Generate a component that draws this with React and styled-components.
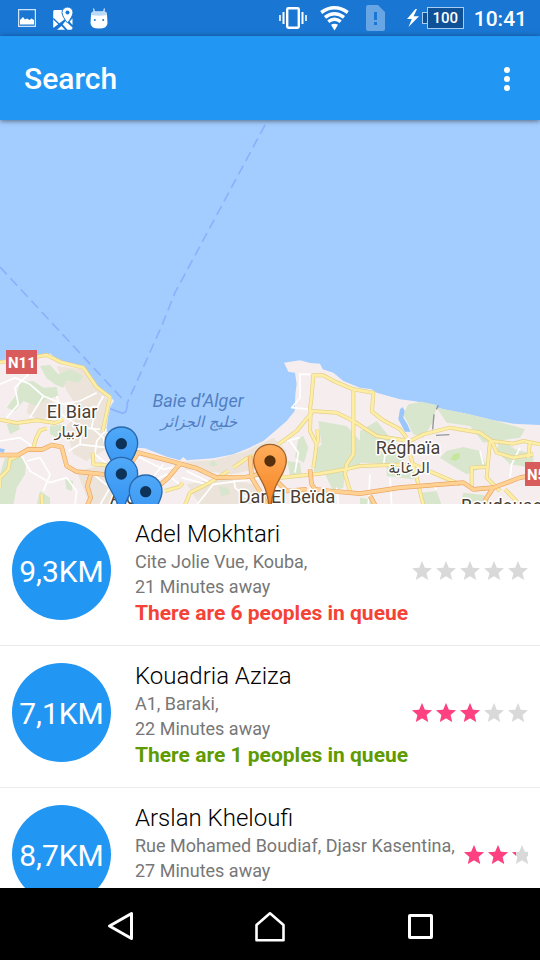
import React from "react";
import styled, { createGlobalStyle } from "styled-components";

const GlobalStyle = createGlobalStyle`
  *, *::before, *::after { box-sizing: border-box; }
  body {
    margin: 0;
    background: #fff;
    font-family: Roboto, "Noto Sans", sans-serif;
  }
`;

const Screen = styled.div`
  display: flex;
  flex-direction: column;
  height: 100vh;
  overflow: hidden;
`;

const StatusBar = styled.div`
  flex: none;
  display: flex;
  justify-content: space-between;
  align-items: center;
  height: 36px;
  padding: 0 13px 0 18px;
  background: #1976d2;
  color: #fff;
`;

const IconGroup = styled.div`
  display: flex;
  align-items: center;
  gap: ${(p) => p.$gap}px;
`;

const Icon = styled.svg`
  display: block;
  flex: none;
`;

const Battery = styled.span`
  display: flex;
  align-items: center;
  height: 22px;
`;

const BatteryNub = styled.span`
  width: 5px;
  height: 12px;
  border: 1px solid #a9cdf2;
  border-right: 0;
  background: #0f5197;
`;

const BatteryBody = styled.span`
  width: 37px;
  height: 22px;
  border: 1px solid #a9cdf2;
  background: #0f5197;
  font-size: 15px;
  line-height: 20px;
  font-weight: 500;
  text-align: center;
`;

const Clock = styled.time`
  font-size: 21px;
  line-height: 36px;
  padding-top: 2px;
  font-weight: 500;
`;

const AppBar = styled.header`
  position: relative;
  z-index: 1;
  flex: none;
  display: flex;
  justify-content: space-between;
  align-items: center;
  height: 84px;
  padding: 2px 9px 0 24px;
  background: #2196f3;
  color: #fff;
  box-shadow: 0 1px 5px rgba(0, 0, 0, 0.5);
`;

const Title = styled.h1`
  margin: 0;
  font-size: 30px;
  line-height: 36px;
  font-weight: 500;
`;

const IconButton = styled.button`
  display: flex;
  justify-content: center;
  align-items: center;
  width: 48px;
  height: 48px;
  padding: 0;
  border: 0;
  background: none;
  color: inherit;
`;

const MapArea = styled.section`
  flex: 1 1 0;
  min-height: 0;
  background: #a4cdff;
`;

const MapCanvas = styled.svg`
  display: block;
  width: 100%;
  height: 100%;
`;

const MapLabel = styled.text`
  font-family: Roboto, sans-serif;
  font-size: ${(p) => p.$size || 18}px;
  fill: ${(p) => (p.$sea ? "#527fc2" : "#493f35")};
  font-style: ${(p) => (p.$sea ? "italic" : "normal")};
  stroke: ${(p) => (p.$sea ? "none" : "#fff")};
  stroke-width: 3px;
  stroke-linejoin: round;
  paint-order: stroke;
  text-anchor: ${(p) => p.$anchor || "middle"};
`;

const ArabicLabel = styled(MapLabel)`
  font-family: "DejaVu Sans", sans-serif;
`;

const ShieldText = styled.text`
  font-family: Roboto, sans-serif;
  font-size: 15px;
  font-weight: 700;
  fill: #fff;
`;

const DoctorList = styled.ul`
  flex: 1 1 0;
  min-height: 0;
  margin: 0;
  padding: 0;
  overflow-y: auto;
  scrollbar-width: none;
  list-style: none;
  background: #fff;
`;

const DoctorRow = styled.li`
  display: flex;
  align-items: center;
  height: 142px;
  padding: 0 12px 8px;
  border-bottom: 1px solid #ececec;
`;

const Distance = styled.div`
  flex: none;
  display: flex;
  justify-content: center;
  align-items: center;
  width: 99px;
  height: 99px;
  padding-top: 2px;
  border-radius: 50%;
  background: #2196f3;
  color: #fff;
  font-size: 30px;
  line-height: 36px;
`;

const Info = styled.div`
  flex: 1 0 auto;
  padding: 4px 0 0 24px;
  white-space: nowrap;
`;

const Name = styled.h2`
  margin: 0;
  color: #000;
  font-size: 24px;
  line-height: 30px;
  font-weight: 300;
`;

const Detail = styled.p`
  margin: 0;
  padding-right: 7px;
  color: #777;
  font-size: 18px;
  line-height: 25px;
`;

const Queue = styled.p`
  margin: 0;
  color: ${(p) => (p.$busy ? "#f44336" : "#5f9b00")};
  font-size: 21px;
  line-height: 28px;
  font-weight: 700;
`;

const Stars = styled.div`
  flex: 0 1 118px;
  min-width: 0;
  display: flex;
  overflow: hidden;
`;

const NavBar = styled.nav`
  flex: none;
  display: flex;
  justify-content: center;
  align-items: center;
  height: 72px;
  padding-top: 4px;
  background: #000;
  color: #fff;
`;

const NavButton = styled(IconButton)`
  flex: 0 1 150px;
`;

const STAR =
  "M12 17.27L18.18 21l-1.64-7.03L22 9.24l-7.19-.61L12 2 9.19 8.63 2 9.24l5.46 4.73L5.82 21z";

function Rating({ id, value }) {
  return (
    <Stars role="img" aria-label={`${value} of 5 stars`}>
      {[0, 1, 2, 3, 4].map((i) => {
        const part = Math.max(0, Math.min(1, value - i));
        return (
          <Icon key={i} width="24" height="24" viewBox="0 0 24 24">
            <clipPath id={`${id}-${i}`}>
              <rect width={24 * part} height="24" />
            </clipPath>
            <path d={STAR} fill="#d9d9d9" />
            <path d={STAR} fill="#ff4081" clipPath={`url(#${id}-${i})`} />
          </Icon>
        );
      })}
    </Stars>
  );
}

function Pin({ x, y, tone }) {
  const orange = tone === "orange";
  return (
    <g transform={`translate(${x} ${y})`}>
      <path
        d="M0-50C-29-50-49-28-49-1C-49 30-26 50-14 84C-8 102-4 118-3 136L3 136C4 118 8 102 14 84C26 50 49 30 49-1C49-28 29-50 0-50Z"
        fill={orange ? "url(#pinOrange)" : "url(#pinBlue)"}
        stroke={orange ? "#a2622a" : "#2a68ab"}
        strokeWidth="4"
      />
      <circle r="17" fill={orange ? "#552f0c" : "#0d3358"} />
    </g>
  );
}

const GREENS = [
  "M120 75L150 72 175 100 210 85 250 105 235 125 200 118 190 140 165 130 140 112Z",
  "M60 125L100 120 130 140 170 138 175 165 140 175 110 195 70 180 45 210 20 200 50 160Z",
  "M15 350L60 345 80 360 75 400 50 440 40 492 0 492 0 400Z",
  "M150 255L190 250 200 275 170 290 150 280Z",
  "M120 450L150 470 150 492 110 492Z",
  "M195 415L220 420 215 450 200 445Z",
  "M20 250L55 245 60 265 30 280Z",
  "M895 290L910 285 925 320 912 365 885 350Z",
  "M862 360L900 365 905 400 870 405Z",
  "M955 240L1040 255 1080 300 1080 375 1035 385 1030 440 1000 450 975 400 940 405 945 330 965 310Z",
  "M1080 270L1130 240 1170 290 1220 350 1190 370 1080 365Z",
  "M1225 190L1265 182 1310 192 1300 240 1270 290 1240 280 1210 220Z",
  "M1310 200L1400 218 1490 240 1575 265 1560 290 1450 305 1410 255 1340 245Z",
  "M1340 330L1390 318 1440 330 1460 375 1400 400 1350 370 1320 350Z",
  "M1160 370L1260 395 1240 415 1160 405Z",
  "M1080 470L1110 475 1130 492 1080 492Z",
  "M1390 455L1450 462 1480 492 1380 492Z",
  "M1500 290L1545 325 1600 340 1600 380 1530 370 1490 330Z",
  "M1260 455L1310 450 1325 492 1270 492Z",
  "M655 435L685 440 690 460 665 465Z",
  "M640 358L653 370 640 378 626 368Z",
];

const BEIGES = [
  "M170 75L245 85 305 150 325 180 305 250 325 320 260 360 220 340 195 260 240 210 200 150Z",
  "M90 170L150 165 170 210 120 240 80 215Z",
  "M230 390L320 370 350 410 340 492 270 492Z",
  "M545 362L640 358 740 330 820 290 860 330 780 380 700 400 560 385Z",
  "M560 430L660 410 760 430 800 492 600 492Z",
  "M1080 300L1130 290 1150 340 1090 345Z",
];

const STREETS = [
  "M0 130L45 110 90 130 130 165 190 190 240 180 290 155",
  "M60 60L85 100 45 140 55 190 20 230",
  "M170 165L185 220 245 260 300 265",
  "M310 165L285 210 275 260 310 290 320 330",
  "M245 260L240 310 205 330 M240 310L320 320",
  "M200 185L240 215 285 195 M130 165L90 230",
  "M60 335L90 390 150 425 200 410 230 450 225 492",
  "M0 300L60 290 110 325 M80 360L120 350 150 400 130 450",
  "M280 400L330 440 300 492 M420 440L500 400 540 430",
  "M320 265L290 300 285 340 335 380",
  "M410 345L490 385 540 375 M450 420L490 370",
  "M640 430L790 410 840 400 M700 400L705 440 740 470",
  "M900 95L900 170 875 200 930 205 M900 100L930 100",
  "M870 300L895 335 885 395 M860 300L900 290",
  "M560 390L640 430 590 492 M545 410L620 430",
  "M1170 410L1175 492 M1110 400L1105 492 M1290 425L1310 445",
  "M1560 320L1535 370 1530 410 M1450 370L1440 330",
  "M1150 380L1160 300 M930 420L935 492 M1010 440L1015 492",
];

const YELLOWS = [
  "M0 64L140 42 185 64 250 80 290 138 330 168 320 215 308 270",
  "M0 236L50 246 110 238 165 246 190 235",
  "M140 262L120 268 108 292 100 320",
  "M55 345L30 355 25 385 0 410 0 440",
  "M278 335L280 370 320 372",
  "M125 460L127 492",
  "M495 450L540 437",
  "M540 437L548 425",
  "M555 492L570 455 630 425 685 390",
  "M700 380L740 352 760 345",
  "M835 310L890 270 935 215 930 205 935 165 940 103 970 103 1005 122 1060 145 1120 155 1116 212 1150 238 1200 265 1220 290",
  "M935 210L1010 215 1060 240 1130 285 1215 298",
  "M932 210L930 270 950 310 940 380",
  "M952 265L955 305",
  "M1060 150L1060 340 1040 370 1035 400 1050 450",
  "M840 410L960 398 1035 385 1080 375 1240 370 1380 430",
  "M1220 305L1270 280 1350 260 1440 275 1475 300 1540 308 1570 300 1620 310",
  "M1475 300L1490 335 1540 350 1600 340",
  "M1470 300L1460 410 1500 450",
  "M1415 440L1415 380 1460 378",
  "M1230 340L1250 410 1270 492",
  "M1590 300L1585 350",
  "M1515 445L1560 492",
];

const ORANGES = [
  "M0 342L55 342 85 325 125 326 155 312 185 318 200 375 230 392 330 402 400 355",
  "M272 402L262 435 272 470 262 492",
  "M405 332L540 368 590 382 650 410 740 408 775 400",
  "M415 335L390 370",
  "M540 368L505 410 470 440",
  "M750 345L755 410 785 460 800 492",
  "M775 400L830 420 860 450 920 445",
  "M930 385L935 430 945 445 990 450 1080 458 1200 440 1390 425 1420 445 1480 440 1560 410 1620 400",
  "M1480 440L1460 470 1450 492",
  "M1110 465L1125 492",
];

function Roads({ paths, edge, fill, width }) {
  return (
    <g fill="none" strokeLinejoin="round">
      <g stroke={edge} strokeWidth={width}>
        {paths.map((d) => (
          <path key={d} d={d} />
        ))}
      </g>
      <g stroke={fill} strokeWidth={width - 4}>
        {paths.map((d) => (
          <path key={d} d={d} />
        ))}
      </g>
    </g>
  );
}

function CityMap() {
  return (
    <MapCanvas
      viewBox="0 120 540 384"
      preserveAspectRatio="xMidYMax slice"
      role="img"
      aria-label="Map of nearby doctors"
    >
      <defs>
        <linearGradient id="pinBlue" x1="0" y1="0" x2="0" y2="1">
          <stop offset="0" stopColor="#50a9f8" />
          <stop offset="1" stopColor="#2e8df0" />
        </linearGradient>
        <linearGradient id="pinOrange" x1="0" y1="0" x2="0" y2="1">
          <stop offset="0" stopColor="#ffad5c" />
          <stop offset="1" stopColor="#f58220" />
        </linearGradient>
      </defs>
      <g transform="translate(0 341) scale(0.33333)">
        <path
          d="M0 58L60 55 110 48 140 44 150 37 160 46 185 60 250 76 278 115 300 142 330 165 342 180 332 195 325 225 318 270 405 320 435 322 500 347 540 358 550 348 560 358 640 352 700 340 745 322 790 300 828 268 860 240 884 210 886 160 890 130 885 95 865 92 852 65 900 58 930 66 960 68 968 85 1000 95 1030 120 1080 140 1115 145 1130 155 1200 175 1240 180 1270 185 1330 205 1400 218 1480 238 1540 248 1620 252 1620 500 0 500Z"
          fill="#f6eeee"
        />
        <g fill="#ece4db">
          {BEIGES.map((d) => (
            <path key={d} d={d} />
          ))}
        </g>
        <g fill="#d7e6cd">
          {GREENS.map((d) => (
            <path key={d} d={d} />
          ))}
        </g>
        <path d="M1360 340L1378 335 1380 350 1365 360 1352 355Z" fill="#c6e69b" />
        <path
          d="M1200 205L1208 198 1214 210 1210 230 1222 250 1232 272 1215 272 1195 235Z M0 322L15 325 10 335 0 333Z"
          fill="#9ac6fb"
        />
        <g fill="none" stroke="#fff" strokeWidth="5" strokeLinejoin="round">
          {STREETS.map((d) => (
            <path key={d} d={d} />
          ))}
        </g>
        <Roads paths={YELLOWS} edge="#e6cf85" fill="#fdeea6" width={12} />
        <Roads paths={ORANGES} edge="#eaa765" fill="#ffd193" width={14} />
        <path
          d="M1302 220L1298 265 M1315 193L1309 205 M1308 283L1348 281"
          fill="none"
          stroke="#8e989b"
          strokeWidth="4"
        />
        <g fill="none" stroke="#8cb0fb" strokeWidth="5">
          <path d="M795-648L525-145 485-45 380 190" strokeDasharray="30 16" />
          <path d="M0-222L375 182" strokeDasharray="30 16" />
          <path d="M383 190L378 212 368 217 330 203" />
        </g>
      </g>

      <MapLabel $sea x="198" y="407">Baie d’Alger</MapLabel>
      <ArabicLabel $sea $size={15} x="199" y="427">خليج الجزائر</ArabicLabel>
      <MapLabel x="72" y="418">El Biar</MapLabel>
      <ArabicLabel $size={15} x="71" y="437">الآبيار</ArabicLabel>
      <MapLabel x="408" y="454">Réghaïa</MapLabel>
      <ArabicLabel $size={15} x="409" y="473">الرغاية</ArabicLabel>
      <MapLabel x="287" y="503">Dar El Beïda</MapLabel>
      <MapLabel $anchor="start" x="110" y="504">Alger</MapLabel>
      <MapLabel $anchor="start" x="461" y="512">Boudouaou</MapLabel>

      <rect x="6" y="350" width="31" height="24" fill="#d95c5c" />
      <ShieldText x="8" y="368">N11</ShieldText>
      <rect x="525" y="462" width="31" height="24" fill="#d95c5c" />
      <ShieldText x="527" y="480">N5</ShieldText>

      <g transform="translate(0 341) scale(0.33333)">
        <Pin x={364} y={308} />
        <Pin x={364} y={399} />
        <Pin x={437} y={452} />
        <Pin x={810} y={360} tone="orange" />
      </g>
    </MapCanvas>
  );
}

const DOCTORS = [
  { id: "adel", km: "9,3KM", name: "Adel Mokhtari", address: "Cite Jolie Vue, Kouba,", minutes: 21, queue: 6, rating: 0 },
  { id: "kouadria", km: "7,1KM", name: "Kouadria Aziza", address: "A1, Baraki,", minutes: 22, queue: 1, rating: 3 },
  { id: "arslan", km: "8,7KM", name: "Arslan Kheloufi", address: "Rue Mohamed Boudiaf, Djasr Kasentina,", minutes: 27, queue: 1, rating: 2.25 },
];

function StatusIcons() {
  return (
    <StatusBar>
      <IconGroup $gap={17}>
        <Icon width="18" height="18" viewBox="0 0 18 18">
          <rect x="0.6" y="0.6" width="16.8" height="16.8" fill="none" stroke="#cfe4fa" strokeWidth="1.3" />
          <path d="M2 15.500V11L5 8l2 2.500L9 9.500l2.500 1.500 2-1.500L16 11v4.500Z" fill="#fff" />
        </Icon>
        <Icon width="20" height="23" viewBox="0 0 20 23">
          <path
            d="M1.500 3H9.300C9 7 10 9.500 12 12L1 20.500Q.3 21 .2 20V4.500Q.2 3 1.500 3Z M4 22.700L8.500 19 12 22.700Z M12.500 14L19.500 20.500V21Q19.300 22.700 18 22.700H14.500L9.700 17.500Z M16.500 14.500L19.500 11.500V18Z"
            fill="#fff"
          />
          <path d="M.3 11.500 6 17M1.500 22 8 16.200" stroke="#1976d2" strokeWidth="1.4" fill="none" />
          <path
            d="M14.500 0A5.500 5.500 0 0 0 9 5.500C9 9.500 14.500 16 14.500 16S20 9.500 20 5.500A5.500 5.500 0 0 0 14.500 0Z"
            fill="#fff"
            stroke="#1976d2"
            strokeWidth="1"
          />
          <circle cx="14.500" cy="5.500" r="2" fill="#1976d2" />
        </Icon>
        <Icon width="18" height="21" viewBox="0 0 18 21">
          <path d="M4.500 4.500 3.500.5M13.500 4.500 14.500.5" stroke="#cfe4fa" strokeWidth="1.200" />
          <path d="M1 7Q1 3.500 4 3.500H14Q17 3.500 17 7L17.500 15Q17.500 20.500 9 20.500T.5 15Z" fill="#fff" />
          <path d="M1 7Q1 3.500 4 3.500H14Q17 3.500 17 7Q9 8.500 1 7Z" fill="#bcd9f7" />
          <circle cx="4.800" cy="12" r="1" fill="#1976d2" />
          <circle cx="13.200" cy="12" r="1" fill="#1976d2" />
        </Icon>
      </IconGroup>
      <IconGroup $gap={10}>
        <Icon width="31" height="22" viewBox="0 0 31 22">
          <rect x="8.200" y="1.200" width="11.600" height="19.600" rx="1.200" fill="none" stroke="#fff" strokeWidth="2.400" />
          <path d="M4.500 5v12M23.500 5v12" stroke="#fff" strokeWidth="2" />
          <path d="M1 8v6M27 8v6" stroke="#fff" strokeWidth="1.600" />
        </Icon>
        <Icon width="29" height="25" viewBox="0 0 29 25">
          <g fill="none" stroke="#fff" strokeWidth="3.400">
            <path d="M1.200 6.500Q14.500-3 27.800 6.500" />
            <path d="M5 11.300Q14.500 4 24 11.300" />
            <path d="M8.300 15.600Q14.500 11 20.700 15.600" />
          </g>
          <path d="M11 18.800Q14.500 16.800 18 18.800L14.500 24.500Z" fill="#fff" />
        </Icon>
        <Icon width="38" height="26" viewBox="0 0 38 26">
          <path
            d="M9 0H19L26 7V24Q26 26 24 26H9Q7 26 7 24V2Q7 0 9 0Z M15 7V15H18V7Z M15 17V20H18V17Z"
            fill="#68a5e4"
            fillRule="evenodd"
          />
        </Icon>
        <IconGroup $gap={3}>
          <Icon width="12" height="18" viewBox="0 0 12 18">
            <path d="M8.500 0 0 10H4.800L1.500 18 12 7.300H6.600L10 0Z" fill="#fff" />
          </Icon>
          <Battery>
            <BatteryNub />
            <BatteryBody>100</BatteryBody>
          </Battery>
        </IconGroup>
        <Clock>10:41</Clock>
      </IconGroup>
    </StatusBar>
  );
}

export default function App() {
  return (
    <Screen>
      <GlobalStyle />
      <StatusIcons />
      <AppBar>
        <Title>Search</Title>
        <IconButton type="button" aria-label="More options">
          <Icon width="6" height="24" viewBox="0 0 6 24" fill="currentColor">
            <circle cx="3" cy="3" r="3" />
            <circle cx="3" cy="12" r="3" />
            <circle cx="3" cy="21" r="3" />
          </Icon>
        </IconButton>
      </AppBar>
      <MapArea>
        <CityMap />
      </MapArea>
      <DoctorList>
        {DOCTORS.map((d) => (
          <DoctorRow key={d.id}>
            <Distance>{d.km}</Distance>
            <Info>
              <Name>{d.name}</Name>
              <Detail>{d.address}</Detail>
              <Detail>{d.minutes} Minutes away</Detail>
              <Queue $busy={d.queue > 5}>There are {d.queue} peoples in queue</Queue>
            </Info>
            <Rating id={d.id} value={d.rating} />
          </DoctorRow>
        ))}
      </DoctorList>
      <NavBar>
        <NavButton type="button" aria-label="Back">
          <Icon width="27" height="30" viewBox="0 0 27 30">
            <path d="M24.500 2.500V27.500L2.500 15Z" fill="none" stroke="#fff" strokeWidth="3" strokeLinejoin="round" />
          </Icon>
        </NavButton>
        <NavButton type="button" aria-label="Home">
          <Icon width="30" height="31" viewBox="0 0 30 31">
            <path d="M15 2.300 28.500 14V29.300H1.500V14Z" fill="none" stroke="#fff" strokeWidth="2.600" strokeLinejoin="round" />
          </Icon>
        </NavButton>
        <NavButton type="button" aria-label="Recent apps">
          <Icon width="25" height="25" viewBox="0 0 25 25">
            <rect x="1.500" y="1.500" width="22" height="22" rx="0.500" fill="none" stroke="#fff" strokeWidth="3" />
          </Icon>
        </NavButton>
      </NavBar>
    </Screen>
  );
}
